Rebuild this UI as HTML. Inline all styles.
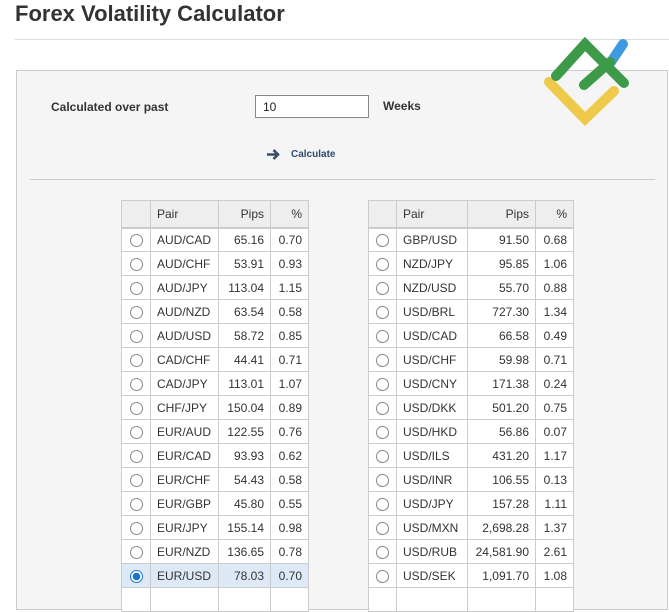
<!DOCTYPE html>
<html><head><meta charset="utf-8"><style>
*{box-sizing:border-box;margin:0;padding:0}
body{width:669px;height:591px;overflow:hidden;background:#fff;font-family:"Liberation Sans",Arial,sans-serif;color:#333;position:relative}
h1{position:absolute;left:15px;top:1px;font-size:22px;font-weight:bold;color:#333}
.hr{position:absolute;left:15px;top:39px;width:654px;height:1px;background:#ddd}
.panel{position:absolute;left:16px;top:70px;width:652px;height:540px;background:#f5f5f5;border:1px solid #ccc}
.lbl{position:absolute;font-size:12px;font-weight:bold;color:#333}
.inp{position:absolute;left:255px;top:95px;width:114px;height:23px;background:#fff;border:1px solid #888;font-size:12px;padding:4px 0 0 7px;color:#222}
.calc{position:absolute;left:291px;top:149px;font-size:10px;font-weight:bold;color:#2c4a6a}
.sep{position:absolute;left:30px;top:179px;width:625px;height:1px;background:#ccc}
table{position:absolute;top:200px;border-collapse:collapse;table-layout:fixed;background:#fff;font-size:12px;color:#333}
td,th{border:1px solid #ccc;height:24px;padding:0 6px;white-space:nowrap}
th{background:#eee;height:27px;font-weight:normal;border-bottom:2px solid #ccc}
th.p,td.p{text-align:left}
td.n,th.n{text-align:right}
td.r{padding:0;text-align:center}
.rad{display:inline-block;width:13px;height:13px;border:1px solid #888;border-radius:50%;vertical-align:middle;background:#fff}
.sel td{background:#dde9f7}
.rad.on{border-color:#1a73d0;background:radial-gradient(circle,#1a73d0 0 3.5px,#fff 4px)}
</style></head><body>
<h1>Forex Volatility Calculator</h1>
<div class="hr"></div>
<div class="panel"></div>
<div class="lbl" style="left:51px;top:100px">Calculated over past</div>
<div class="inp">10</div>
<div class="lbl" style="left:383px;top:99px">Weeks</div>
<svg style="position:absolute;left:266px;top:148px" width="15" height="13" viewBox="0 0 15 13"><path d="M1 6.5H12M7.5 2L12 6.5L7.5 11" stroke="#3a5068" stroke-width="2.6" fill="none"/></svg>
<div class="calc">Calculate</div>
<div class="sep"></div>
<svg style="position:absolute;left:535px;top:35px" width="100" height="100" viewBox="535 35 100 100">
<g stroke-linecap="round" fill="none" stroke-width="10">
<path d="M549 82L585 119L614 91" stroke="#eec94a"/>
<path d="M611 62L623 44" stroke="#3f9ae0"/>
<path d="M556 76L585 44L624 83" stroke="#3d9a48"/>
<path d="M584 85L610 62" stroke="#3d9a48"/>
</g></svg>
<table style="left:121px;width:188px">
<colgroup><col style="width:29px"><col style="width:68px"><col style="width:52px"><col style="width:38px"></colgroup>
<tr><th></th><th class="p">Pair</th><th class="n">Pips</th><th class="n">%</th></tr>
<tr><td class="r"><span class="rad"></span></td><td>AUD/CAD</td><td class="n">65.16</td><td class="n">0.70</td></tr>
<tr><td class="r"><span class="rad"></span></td><td>AUD/CHF</td><td class="n">53.91</td><td class="n">0.93</td></tr>
<tr><td class="r"><span class="rad"></span></td><td>AUD/JPY</td><td class="n">113.04</td><td class="n">1.15</td></tr>
<tr><td class="r"><span class="rad"></span></td><td>AUD/NZD</td><td class="n">63.54</td><td class="n">0.58</td></tr>
<tr><td class="r"><span class="rad"></span></td><td>AUD/USD</td><td class="n">58.72</td><td class="n">0.85</td></tr>
<tr><td class="r"><span class="rad"></span></td><td>CAD/CHF</td><td class="n">44.41</td><td class="n">0.71</td></tr>
<tr><td class="r"><span class="rad"></span></td><td>CAD/JPY</td><td class="n">113.01</td><td class="n">1.07</td></tr>
<tr><td class="r"><span class="rad"></span></td><td>CHF/JPY</td><td class="n">150.04</td><td class="n">0.89</td></tr>
<tr><td class="r"><span class="rad"></span></td><td>EUR/AUD</td><td class="n">122.55</td><td class="n">0.76</td></tr>
<tr><td class="r"><span class="rad"></span></td><td>EUR/CAD</td><td class="n">93.93</td><td class="n">0.62</td></tr>
<tr><td class="r"><span class="rad"></span></td><td>EUR/CHF</td><td class="n">54.43</td><td class="n">0.58</td></tr>
<tr><td class="r"><span class="rad"></span></td><td>EUR/GBP</td><td class="n">45.80</td><td class="n">0.55</td></tr>
<tr><td class="r"><span class="rad"></span></td><td>EUR/JPY</td><td class="n">155.14</td><td class="n">0.98</td></tr>
<tr><td class="r"><span class="rad"></span></td><td>EUR/NZD</td><td class="n">136.65</td><td class="n">0.78</td></tr>
<tr class="sel"><td class="r"><span class="rad on"></span></td><td>EUR/USD</td><td class="n">78.03</td><td class="n">0.70</td></tr>
<tr><td class="r"></td><td></td><td></td><td></td></tr>
</table>
<table style="left:368px;width:206px">
<colgroup><col style="width:28px"><col style="width:71px"><col style="width:68px"><col style="width:38px"></colgroup>
<tr><th></th><th class="p">Pair</th><th class="n">Pips</th><th class="n">%</th></tr>
<tr><td class="r"><span class="rad"></span></td><td>GBP/USD</td><td class="n">91.50</td><td class="n">0.68</td></tr>
<tr><td class="r"><span class="rad"></span></td><td>NZD/JPY</td><td class="n">95.85</td><td class="n">1.06</td></tr>
<tr><td class="r"><span class="rad"></span></td><td>NZD/USD</td><td class="n">55.70</td><td class="n">0.88</td></tr>
<tr><td class="r"><span class="rad"></span></td><td>USD/BRL</td><td class="n">727.30</td><td class="n">1.34</td></tr>
<tr><td class="r"><span class="rad"></span></td><td>USD/CAD</td><td class="n">66.58</td><td class="n">0.49</td></tr>
<tr><td class="r"><span class="rad"></span></td><td>USD/CHF</td><td class="n">59.98</td><td class="n">0.71</td></tr>
<tr><td class="r"><span class="rad"></span></td><td>USD/CNY</td><td class="n">171.38</td><td class="n">0.24</td></tr>
<tr><td class="r"><span class="rad"></span></td><td>USD/DKK</td><td class="n">501.20</td><td class="n">0.75</td></tr>
<tr><td class="r"><span class="rad"></span></td><td>USD/HKD</td><td class="n">56.86</td><td class="n">0.07</td></tr>
<tr><td class="r"><span class="rad"></span></td><td>USD/ILS</td><td class="n">431.20</td><td class="n">1.17</td></tr>
<tr><td class="r"><span class="rad"></span></td><td>USD/INR</td><td class="n">106.55</td><td class="n">0.13</td></tr>
<tr><td class="r"><span class="rad"></span></td><td>USD/JPY</td><td class="n">157.28</td><td class="n">1.11</td></tr>
<tr><td class="r"><span class="rad"></span></td><td>USD/MXN</td><td class="n">2,698.28</td><td class="n">1.37</td></tr>
<tr><td class="r"><span class="rad"></span></td><td>USD/RUB</td><td class="n">24,581.90</td><td class="n">2.61</td></tr>
<tr><td class="r"><span class="rad"></span></td><td>USD/SEK</td><td class="n">1,091.70</td><td class="n">1.08</td></tr>
<tr><td class="r"></td><td></td><td></td><td></td></tr>
</table>
</body></html>
